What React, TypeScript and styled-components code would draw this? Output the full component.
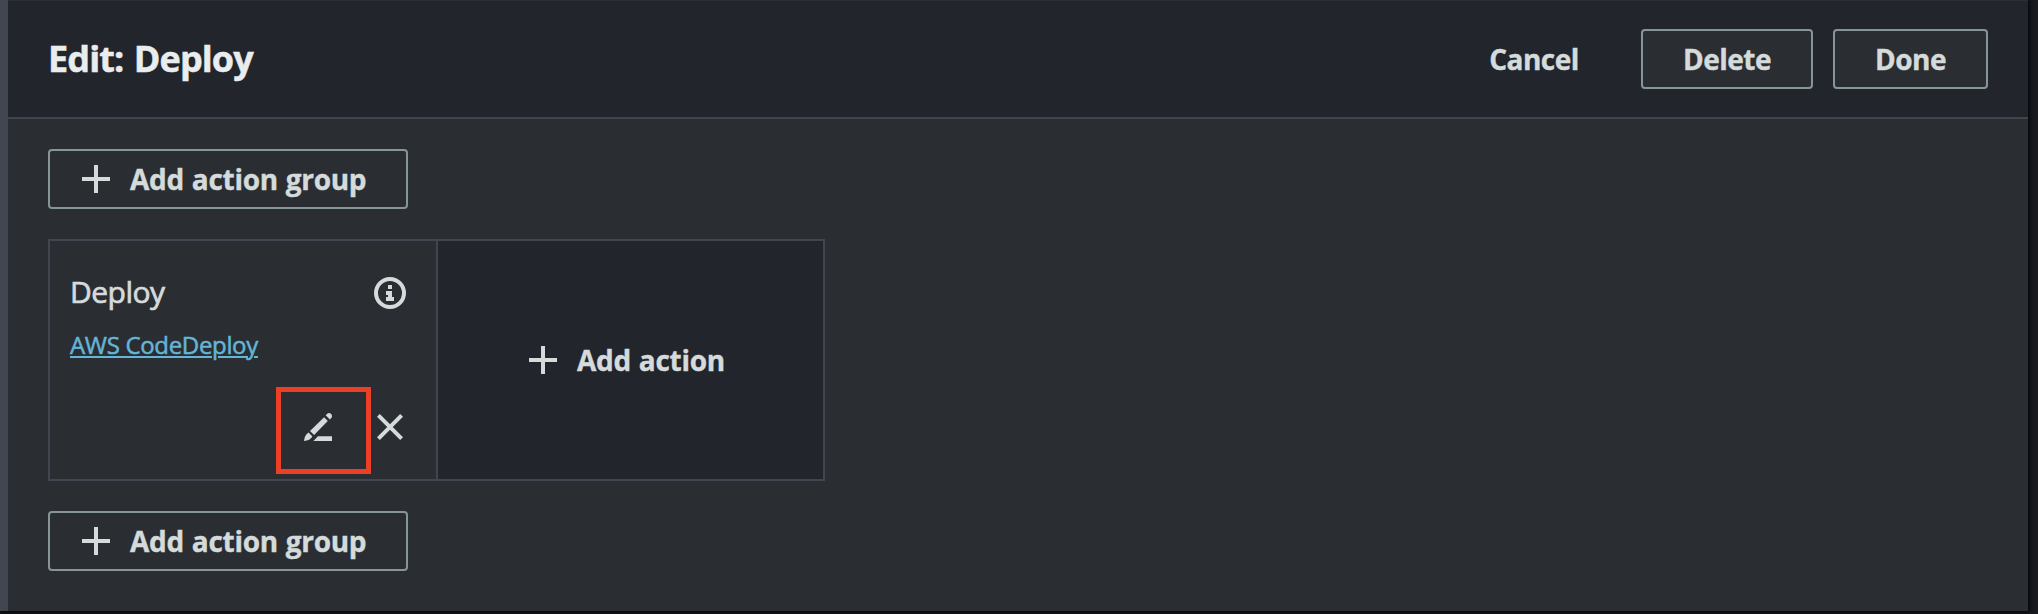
import React from "react";
import styled, { createGlobalStyle } from "styled-components";

const GlobalStyle = createGlobalStyle`
  * { box-sizing: border-box; }
  html, body { margin: 0; padding: 0; }
  body {
    background: #17191f;
    font-family: "Open Sans", "Noto Sans", sans-serif;
    color: #d5dbdb;
    overflow: hidden;
  }
`;

const Page = styled.div`
  display: flex;
  width: 2038px;
  height: 614px;
  padding: 0 10px 3px 0;
`;

const Stage = styled.main`
  flex: 1;
  display: flex;
  flex-direction: column;
  border-left: 8px solid #424650;
  background: #2a2e33;
  box-shadow: 1px 1px 3px 1px #08090b;
`;

const Header = styled.header`
  display: flex;
  align-items: center;
  justify-content: space-between;
  height: 119px;
  padding: 0 40px;
  background: #22252c;
  border-top: 1px solid #2b2f34;
  border-bottom: 2px solid #414550;
`;

const Title = styled.h1`
  margin: 0;
  font-size: 36px;
  line-height: 44px;
  font-weight: 700;
  letter-spacing: -0.9px;
  word-spacing: 2px;
  -webkit-text-stroke: 0.5px currentColor;
  color: #eaeded;
`;

const Actions = styled.div`
  display: flex;
  align-items: center;
`;

const Button = styled.button<{ $width: number; $plain?: boolean; $gap?: number; $inset?: number }>`
  display: flex;
  align-items: center;
  justify-content: ${(p) => (p.$inset ? "flex-start" : "center")};
  width: ${(p) => p.$width}px;
  height: 60px;
  margin: 0 0 0 ${(p) => p.$gap ?? 0}px;
  padding: 0 0 1px ${(p) => p.$inset ?? 0}px;
  border: 2px solid ${(p) => (p.$plain ? "transparent" : "#879596")};
  border-radius: 4px;
  background: ${(p) => (p.$plain ? "transparent" : "#2a2e33")};
  color: #d5dbdb;
  font: inherit;
  font-size: 28px;
  line-height: 40px;
  font-weight: 700;
  letter-spacing: ${(p) => (p.$inset ? -0.3 : -0.5)}px;
  word-spacing: 1px;
  -webkit-text-stroke: 0.4px currentColor;
  white-space: nowrap;
`;

const Body = styled.section`
  display: flex;
  flex-direction: column;
  align-items: flex-start;
  gap: 30px;
  padding: 30px 40px;
`;

const PlusSvg = styled.svg`
  display: block;
  flex: none;
  margin: 1px 20px 0 0;
`;

const Group = styled.div`
  display: flex;
  width: 777px;
  height: 242px;
  border: 2px solid #414550;
`;

const Card = styled.article`
  display: flex;
  flex-direction: column;
  width: 388px;
  padding: 30px 20px 5px 20px;
  border-right: 2px solid #414550;
`;

const CardTop = styled.div`
  display: flex;
  align-items: center;
  justify-content: space-between;
  height: 44px;
  padding-right: 10px;
`;

const Name = styled.span`
  padding-bottom: 2px;
  font-size: 30px;
  line-height: 44px;
  letter-spacing: -0.5px;
  -webkit-text-stroke: 0.7px currentColor;
`;

const Provider = styled.a`
  align-self: flex-start;
  margin-top: 13px;
  font-size: 24px;
  line-height: 34px;
  letter-spacing: -0.33px;
  -webkit-text-stroke: 0.5px currentColor;
  color: #64b5d6;
  text-decoration: underline;
  text-decoration-thickness: 2px;
  text-underline-offset: 2px;
`;

const Tools = styled.div`
  display: flex;
  align-items: flex-start;
  justify-content: flex-end;
  gap: 6px;
  margin-top: auto;
  padding-right: 13px;
`;

const EditTool = styled.span`
  display: flex;
  width: 95px;
  height: 87px;
  padding: 21px 0 0 23px;
  border: 5px solid #eb4026;
`;

const CrossSvg = styled.svg`
  display: block;
  flex: none;
  margin-top: 27px;
`;

const AddCell = styled.div`
  flex: 1;
  display: flex;
  align-items: center;
  background: #22252c;
`;

const Plus = () => (
  <PlusSvg width="28" height="28" viewBox="0 0 28 28" fill="none" stroke="#d5dbdb" strokeWidth="4">
    <path d="M0 14H28M14 0V28" />
  </PlusSvg>
);

const Info = () => (
  <svg width="32" height="32" viewBox="0 0 32 32">
    <circle cx="16" cy="16" r="14" fill="none" stroke="#d5dbdb" strokeWidth="4" />
    <path d="M14 8h4v4h-4zM12 14h6v6h2v4h-8v-4h2v-2h-2z" fill="#d5dbdb" />
  </svg>
);

const Pencil = () => (
  <svg width="28" height="28" viewBox="0 0 28 28" fill="#d5dbdb">
    <path d="M21.7 2.3L23.3.7Q25.2-.6 27.1 1Q28.8 3 27.3 4.9L25.8 6.4Z" />
    <path d="M20.1 4.2L23.8 8.1L10.1 21.9L6 17.9Z" />
    <path d="M4.6 19.5L8.4 23.5Q6 27.5 0 28Q.4 22.4 4.6 19.5Z" />
    <path d="M14 23.3H28V28H9.4Z" />
  </svg>
);

const Cross = () => (
  <CrossSvg width="26" height="26" viewBox="0 0 26 26" fill="none" stroke="#d5dbdb" strokeWidth="4">
    <path d="M1.4 1.4L24.6 24.6M24.6 1.4L1.4 24.6" />
  </CrossSvg>
);

const AddGroup = () => (
  <Button $width={360} $inset={32}>
    <Plus />
    Add action group
  </Button>
);

export default function App() {
  return (
    <Page>
      <GlobalStyle />
      <Stage>
        <Header>
          <Title>Edit: Deploy</Title>
          <Actions>
            <Button $width={154} $plain>Cancel</Button>
            <Button $width={172} $gap={30}>Delete</Button>
            <Button $width={155} $gap={20}>Done</Button>
          </Actions>
        </Header>
        <Body>
          <AddGroup />
          <Group>
            <Card>
              <CardTop>
                <Name>Deploy</Name>
                <Info />
              </CardTop>
              <Provider>AWS CodeDeploy</Provider>
              <Tools>
                <EditTool>
                  <Pencil />
                </EditTool>
                <Cross />
              </Tools>
            </Card>
            <AddCell>
              <Button $width={385} $inset={89} $plain>
                <Plus />
                Add action
              </Button>
            </AddCell>
          </Group>
          <AddGroup />
        </Body>
      </Stage>
    </Page>
  );
}
